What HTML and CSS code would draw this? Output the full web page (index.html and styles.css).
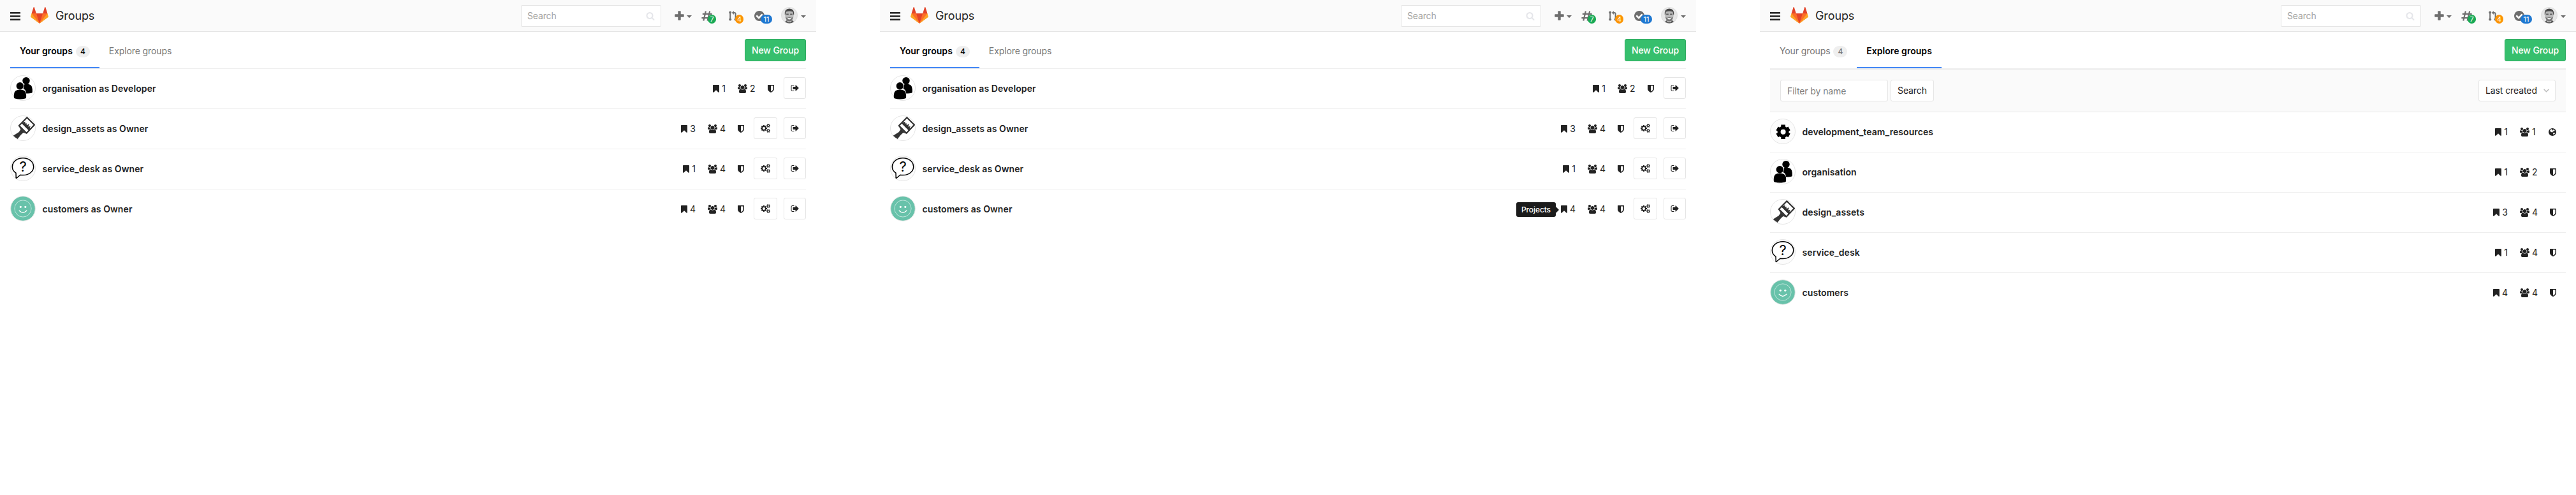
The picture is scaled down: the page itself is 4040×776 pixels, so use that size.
FILE: index.html
```html
<!DOCTYPE html>
<html lang="en">
<head>
<meta charset="utf-8">
<title>Groups</title>
<link rel="stylesheet" href="styles.css">
</head>
<body>
<svg class="sprite" aria-hidden="true">
  <symbol id="i-menu" viewBox="0 0 16 13"><path d="M0 0h16v2.4H0zM0 5.3h16v2.4H0zM0 10.6h16V13H0z"/></symbol>
  <symbol id="i-logo" viewBox="0 0 36 36"><path fill="#e24329" d="M2 14l9.38 9v-9l-4-12.28c-.205-.632-1.176-.632-1.38 0zM34 14l-9.38 9v-9l4-12.28c.205-.632 1.176-.632 1.38 0zM18 34.38L3 14h30z"/><path fill="#fc6d26" d="M18 34.38L11.38 14H2l4 11.5zM18 34.38L24.62 14H34l-4 11.5z"/><path fill="#fca326" d="M2 14L.1 20.16c-.18.565 0 1.2.5 1.56L18 34.38zM34 14l1.9 6.16c.18.565 0 1.2-.5 1.56L18 34.38z"/></symbol>
  <symbol id="i-search" viewBox="0 0 1792 1792"><path d="M1216 832q0-185-131.5-316.5t-316.5-131.5-316.5 131.5-131.5 316.5 131.5 316.5 316.5 131.5 316.5-131.5 131.5-316.5zm512 832q0 52-38 90t-90 38q-54 0-90-38l-343-342q-179 124-399 124-143 0-273.5-55.5t-225-150-150-225-55.5-273.5 55.5-273.5 150-225 225-150 273.5-55.5 273.5 55.5 225 150 150 225 55.5 273.5q0 220-124 399l343 343q37 37 37 90z"/></symbol>
  <symbol id="i-plus" viewBox="0 0 15 15"><rect x="5.3" y=".3" width="4.4" height="14.4" rx="1"/><rect x=".3" y="5.3" width="14.4" height="4.4" rx="1"/></symbol>
  <symbol id="i-caret" viewBox="0 0 8 4"><path d="M0 0h8L4.4 3.8a.5.5 0 0 1-.8 0z"/></symbol>
  <symbol id="i-hash" viewBox="0 0 17 16"><path fill="none" stroke="currentColor" stroke-width="2.2" d="M6.9.4L3.3 15.6M13.2.4L9.6 15.6M1.8 4.9h14.8M.4 11.1h14.8"/></symbol>
  <symbol id="i-merge" viewBox="0 0 13 16"><g fill="none" stroke="currentColor" stroke-width="2"><path d="M2.2 2v12M7 3h1.8q1.800 0 1.800 1.800V14"/></g><circle cx="2.200" cy="2.400" r="2"/><circle cx="2.200" cy="13.600" r="2"/><circle cx="10.600" cy="13.600" r="2"/><path d="M7.800 0v6L4.800 3z"/></symbol>
  <symbol id="i-check" viewBox="128 128 1536 1536"><path d="M1412 734q0-28-18-46l-91-90q-19-19-45-19t-45 19l-408 407-226-226q-19-19-45-19t-45 19l-91 90q-18 18-18 46 0 27 18 45l362 362q19 19 45 19 27 0 46-19l543-543q18-18 18-45zm252 162q0 209-103 385.5t-279.5 279.5-385.5 103-385.5-103-279.5-279.5-103-385.5 103-385.5 279.5-279.5 385.5-103 385.5 103 279.5 279.5 103 385.5z"/></symbol>
  <symbol id="i-bookmark" viewBox="256 128 1281 1536"><path d="M1420 128q23 0 44 9 33 13 52.5 41t19.5 62v1289q0 34-19.5 62t-52.5 41q-19 8-44 8-48 0-83-32l-441-424-441 424q-36 33-83 33-23 0-44-9-33-13-52.5-41t-19.5-62v-1289q0-34 19.5-62t52.5-41q21-9 44-9h1048z"/></symbol>
  <symbol id="i-users" viewBox="0 0 1920 1792"><path d="M593 896q-162 5-265 128h-134q-82 0-138-40.5t-56-118.5q0-353 124-353 6 0 43.5 21t97.5 42.5 119 21.5q67 0 133-23-5 37-5 66 0 139 81 256zm1071 637q0 120-73 189.5t-194 69.5h-874q-121 0-194-69.5t-73-189.5q0-53 3.5-103.5t14-109 26.5-108.5 43-97.5 62-81 85.5-53.5 111.5-20q10 0 43 21.5t73 48 107 48 135 21.5 135-21.5 107-48 73-48 43-21.5q61 0 111.5 20t85.5 53.5 62 81 43 97.5 26.5 108.5 14 109 3.5 103.5zm-1024-1277q0 106-75 181t-181 75-181-75-75-181 75-181 181-75 181 75 75 181zm704 384q0 159-112.5 271.5t-271.5 112.5-271.5-112.5-112.5-271.5 112.5-271.5 271.5-112.5 271.5 112.5 112.5 271.5zm576 225q0 78-56 118.5t-138 40.5h-134q-103-123-265-128 81-117 81-256 0-29-5-66 66 23 133 23 59 0 119-21.5t97.5-42.5 43.5-21q124 0 124 353zm-128-609q0 106-75 181t-181 75-181-75-75-181 75-181 181-75 181 75 75 181z"/></symbol>
  <symbol id="i-shield" viewBox="256 128 1280 1536"><path d="M1344 960v-640h-448v1137q119-63 213-137 235-184 235-360zm192-768v768q0 86-33.5 170.5t-83 150-118 127.5-126.5 103-121 77.5-89.5 49.5-42.5 20q-12 6-26 6t-26-6q-16-7-42.5-20t-89.5-49.5-121-77.5-126.5-103-118-127.5-83-150-33.5-170.5v-768q0-26 19-45t45-19h1152q26 0 45 19t19 45z"/></symbol>
  <symbol id="i-globe" viewBox="0 0 12 12"><circle cx="6" cy="6" r="6"/><path fill="#fff" d="M2.200 3.200Q3.200 1.800 4.800 1.300l1 .8-.6.9 1 .7 1-1.500 1.600.3.900 1.200-1.300.9-1.600.7-1.400 1.500-1.200-.9-1.500-.6zM7.200 7.600l1.700-.7 1.200.5-.7 1.500-1.500 1-.8-1z"/></symbol>
  <symbol id="i-leave" viewBox="0 128 1664 1536"><path d="M704 1440q0 4 1 20t.5 26.5-3 23.5-10 19.5-20.5 6.5h-320q-119 0-203.5-84.5t-84.5-203.5v-704q0-119 84.5-203.5t203.5-84.5h320q13 0 22.5 9.5t9.5 22.5q0 4 1 20t.5 26.5-3 23.5-10 19.5-20.5 6.5h-320q-66 0-113 47t-47 113v704q0 66 47 113t113 47h312l11.5 1 11.5 3 8 5.5 7 9 2 13.5zm928-544q0 26-19 45l-544 544q-19 19-45 19t-45-19-19-45v-288h-448q-26 0-45-19t-19-45v-384q0-26 19-45t45-19h448v-288q0-26 19-45t45-19 45 19l544 544q19 19 19 45z"/></symbol>
  <symbol id="i-cogs" viewBox="0 0 1920 1792"><path d="M896 896q0-106-75-181t-181-75-181 75-75 181 75 181 181 75 181-75 75-181zm768 512q0-52-38-90t-90-38-90 38-38 90q0 53 37.5 90.5t90.5 37.5 90.5-37.5 37.5-90.5zm0-1024q0-52-38-90t-90-38-90 38-38 90q0 53 37.5 90.5t90.5 37.5 90.5-37.5 37.5-90.5zm-384 421v185q0 10-7 19.5t-16 10.5l-155 24q-11 35-32 76 34 48 90 115 7 11 7 20 0 12-7 19-23 30-82.5 89.5t-78.5 59.5q-11 0-21-7l-115-90q-37 19-77 31-11 108-23 155-7 24-30 24h-186q-11 0-20-7.5t-10-17.5l-23-153q-34-10-75-31l-118 89q-7 7-20 7-11 0-21-8-144-133-144-160 0-9 7-19 10-14 41-53t47-61q-23-44-35-82l-152-24q-10-1-17-9.5t-7-19.5v-185q0-10 7-19.5t16-10.5l155-24q11-35 32-76-34-48-90-115-7-11-7-20 0-12 7-20 22-30 82-89t79-59q11 0 21 7l115 90q34-18 77-32 11-108 23-154 7-24 30-24h186q11 0 20 7.5t10 17.5l23 153q34 10 75 31l118-89q8-7 20-7 11 0 21 8 144 133 144 160 0 8-7 19-12 16-42 54t-45 60q23 48 34 82l152 23q10 2 17 10.5t7 19.5zm640 533v140q0 16-149 31-12 27-30 52 51 113 51 138 0 4-4 7-122 71-124 71-8 0-46-47t-52-68q-20 2-30 2t-30-2q-14 21-52 68t-46 47q-2 0-124-71-4-3-4-7 0-25 51-138-18-25-30-52-149-15-149-31v-140q0-16 149-31 13-29 30-52-51-113-51-138 0-4 4-7 4-2 35-20t59-34 30-16q8 0 46 46.5t52 67.5q20-2 30-2t30 2q51-71 92-112l6-2q4 0 124 70 4 3 4 7 0 25-51 138 17 23 30 52 149 15 149 31zm0-1024v140q0 16-149 31-12 27-30 52 51 113 51 138 0 4-4 7-122 71-124 71-8 0-46-47t-52-68q-20 2-30 2t-30-2q-14 21-52 68t-46 47q-2 0-124-71-4-3-4-7 0-25 51-138-18-25-30-52-149-15-149-31v-140q0-16 149-31 13-29 30-52-51-113-51-138 0-4 4-7 4-2 35-20t59-34 30-16q8 0 46 46.5t52 67.5q20-2 30-2t30 2q51-71 92-112l6-2q4 0 124 70 4 3 4 7 0 25-51 138 17 23 30 52 149 15 149 31z"/></symbol>
  <symbol id="i-chevron" viewBox="0 0 10 6"><path fill="none" stroke="currentColor" stroke-width="1.8" d="M.8.8L5 4.9 9.2.8"/></symbol>
  <symbol id="i-face" viewBox="0 0 26 26">
    <circle cx="13" cy="13" r="12.6" fill="#e6e6e6" stroke="#dcdcdc" stroke-width=".8"/>
    <path d="M6 23.200Q8.500 20.500 10 20.400h6Q18.500 20.500 20 23.200 13 27.800 6 23.200z" fill="#555"/>
    <path d="M9 19h8l-1 5h-6z" fill="#bdbdbd"/>
    <ellipse cx="13" cy="12.600" rx="6.800" ry="9" fill="#b9b9b9"/>
    <path d="M5.800 12Q4.800 2.500 13 2.400q8.200.1 7.200 9.600l-1-.2-.8-4.300Q13 5.500 7.600 7.500l-.8 4.300z" fill="#4a4a4a"/>
    <path d="M8.200 10.500h3.600v1.500H8.200zM14.200 10.500h3.600v1.500h-3.600z" fill="#555"/>
    <path d="M7 15.500q1.200 1.300 3 1.200l3-.9 3 .9q1.800.1 3-1.200-.8 6.800-6 7-5.200-.2-6-7z" fill="#767676"/>
    <path d="M9.800 17.300h6.400q-.8 2.200-3.200 2.200t-3.200-2.200z" fill="#f6f6f6"/>
  </symbol>
  <symbol id="a-people" viewBox="0 0 40 40"><circle cx="20" cy="20" r="19.500" fill="#fff" stroke="#e5e5e5"/><circle cx="25" cy="8.600" r="5.700"/><path d="M22 14.500q1.500-1 4-1 8.800.3 8.800 8.500v4.200q-.1 1.300-1.300 1.600-4 1.200-8.500.6Q24.800 23 20.600 21z"/><circle cx="15.300" cy="16.700" r="6.400" fill="#fff"/><circle cx="15.300" cy="16.700" r="5.700"/><path d="M5.800 31q0-8.400 9.700-8.400T25.100 31v3.500q0 1.500-1.600 2-4 1-8 1t-8-1q-1.700-.5-1.700-2z"/></symbol>
  <symbol id="a-brush" viewBox="0 0 40 40"><circle cx="20" cy="20" r="19.500" fill="#fff" stroke="#e5e5e5"/><path d="M26.300 3.200L37.900 14.800 25.600 27.800 13.800 15.900z" fill="#fff" stroke="#333" stroke-width="2.200" stroke-linejoin="round"/><g fill="#333"><path d="M13.200 16.500L25 28.500l-4.500-1.500-3.800 3.500-5.200 6.500q-1.500-1.800-3.200-2.300-1.500-1.700-3.600-3l9-5.600 2.700-4.200-2.300-4z"/><path d="M17.500 12L29.500 24l3.200-3.200-2.200-.8 1.200-2.900-3.400.5 1.700-4.600-4 2.200-.6-3.500-1.700 1.400-.3-3.300z"/></g></symbol>
  <symbol id="a-bubble" viewBox="0 0 40 40"><circle cx="20" cy="20" r="19.500" fill="#fcfcfc" stroke="#e5e5e5"/><path d="M9 27.200C5 24.600 3.300 21.300 3.300 17.500 3.300 9.500 10.800 3.800 20 3.800s16.700 5.700 16.700 13.400S29.500 30.500 20 30.500q-2.200 0-4.100-.3l-5.700 4.800q-1.500.6-1-1z" fill="#fff" stroke="#000" stroke-width="1.500" stroke-linejoin="round"/></symbol>
  <symbol id="a-smile" viewBox="0 0 40 40"><circle cx="20" cy="20" r="19.300" fill="#68c2aa" stroke="#e0e5e3"/><circle cx="20" cy="20" r="13.100" fill="none" stroke="#d5eee7" stroke-width=".8"/><g fill="#fff"><circle cx="16.300" cy="17.300" r="1.600"/><circle cx="23.800" cy="17.300" r="1.600"/></g><path d="M14.200 23.300q5.800 6 11.600 0" fill="none" stroke="#fff" stroke-width="1.300" stroke-linecap="round"/></symbol>
  <symbol id="a-gear" viewBox="0 0 40 40"><circle cx="20" cy="20" r="19.500" fill="#fcfcfc" stroke="#e5e5e5"/><circle cx="20.600" cy="20.800" r="6.500" fill="none" stroke="#000" stroke-width="5"/><path stroke="#000" stroke-width="6.600" d="M20.600 9.600v5M20.600 32v-5M11.100 15.300l4 2.300M30.100 26.300l-4-2.300M11.100 26.300l4-2.300M30.100 15.300l-4 2.300"/></symbol>
</svg>

<main class="board">
  <section class="panel">
    <header class="topbar">
      <svg class="menu"><use href="#i-menu"/></svg>
      <svg class="logo"><use href="#i-logo"/></svg>
      <h1 class="title">Groups</h1>
      <div class="search"><span>Search</span><svg><use href="#i-search"/></svg></div>
      <nav class="tools">
        <span class="tool tool-new"><svg class="plus"><use href="#i-plus"/></svg><svg class="caret"><use href="#i-caret"/></svg></span>
        <span class="tool tool-issues"><svg class="hash"><use href="#i-hash"/></svg><b class="count green">7</b></span>
        <span class="tool tool-merges"><svg class="merge"><use href="#i-merge"/></svg><b class="count orange">4</b></span>
        <span class="tool tool-todos"><svg class="check"><use href="#i-check"/></svg><b class="count blue">11</b></span>
        <span class="tool tool-user"><svg class="face"><use href="#i-face"/></svg><svg class="caret"><use href="#i-caret"/></svg></span>
      </nav>
    </header>
    <div class="content">
      <div class="tabs">
        <a class="tab active">Your groups<span class="pill">4</span></a>
        <a class="tab">Explore groups</a>
        <a class="new-group">New Group</a>
      </div>
      <ul class="groups">
        <li class="group"><svg class="avatar"><use href="#a-people"/></svg><span class="name">organisation as Developer</span>
          <div class="stats"><span class="projects"><svg><use href="#i-bookmark"/></svg>1</span><span class="members"><svg><use href="#i-users"/></svg>2</span><svg class="shield"><use href="#i-shield"/></svg></div>
          <a class="btn leave"><svg><use href="#i-leave"/></svg></a></li>
        <li class="group"><svg class="avatar"><use href="#a-brush"/></svg><span class="name">design_assets as Owner</span>
          <div class="stats"><span class="projects"><svg><use href="#i-bookmark"/></svg>3</span><span class="members"><svg><use href="#i-users"/></svg>4</span><svg class="shield"><use href="#i-shield"/></svg></div>
          <a class="btn cogs"><svg><use href="#i-cogs"/></svg></a><a class="btn leave"><svg><use href="#i-leave"/></svg></a></li>
        <li class="group"><svg class="avatar"><use href="#a-bubble"/><text class="mark" x="20" y="24.800" text-anchor="middle">?</text></svg><span class="name">service_desk as Owner</span>
          <div class="stats"><span class="projects"><svg><use href="#i-bookmark"/></svg>1</span><span class="members"><svg><use href="#i-users"/></svg>4</span><svg class="shield"><use href="#i-shield"/></svg></div>
          <a class="btn cogs"><svg><use href="#i-cogs"/></svg></a><a class="btn leave"><svg><use href="#i-leave"/></svg></a></li>
        <li class="group"><svg class="avatar"><use href="#a-smile"/></svg><span class="name">customers as Owner</span>
          <div class="stats"><span class="projects"><svg><use href="#i-bookmark"/></svg>4</span><span class="members"><svg><use href="#i-users"/></svg>4</span><svg class="shield"><use href="#i-shield"/></svg></div>
          <a class="btn cogs"><svg><use href="#i-cogs"/></svg></a><a class="btn leave"><svg><use href="#i-leave"/></svg></a></li>
      </ul>
    </div>
  </section>

  <section class="panel">
    <header class="topbar">
      <svg class="menu"><use href="#i-menu"/></svg>
      <svg class="logo"><use href="#i-logo"/></svg>
      <h1 class="title">Groups</h1>
      <div class="search"><span>Search</span><svg><use href="#i-search"/></svg></div>
      <nav class="tools">
        <span class="tool tool-new"><svg class="plus"><use href="#i-plus"/></svg><svg class="caret"><use href="#i-caret"/></svg></span>
        <span class="tool tool-issues"><svg class="hash"><use href="#i-hash"/></svg><b class="count green">7</b></span>
        <span class="tool tool-merges"><svg class="merge"><use href="#i-merge"/></svg><b class="count orange">4</b></span>
        <span class="tool tool-todos"><svg class="check"><use href="#i-check"/></svg><b class="count blue">11</b></span>
        <span class="tool tool-user"><svg class="face"><use href="#i-face"/></svg><svg class="caret"><use href="#i-caret"/></svg></span>
      </nav>
    </header>
    <div class="content">
      <div class="tabs">
        <a class="tab active">Your groups<span class="pill">4</span></a>
        <a class="tab">Explore groups</a>
        <a class="new-group">New Group</a>
      </div>
      <ul class="groups">
        <li class="group"><svg class="avatar"><use href="#a-people"/></svg><span class="name">organisation as Developer</span>
          <div class="stats"><span class="projects"><svg><use href="#i-bookmark"/></svg>1</span><span class="members"><svg><use href="#i-users"/></svg>2</span><svg class="shield"><use href="#i-shield"/></svg></div>
          <a class="btn leave"><svg><use href="#i-leave"/></svg></a></li>
        <li class="group"><svg class="avatar"><use href="#a-brush"/></svg><span class="name">design_assets as Owner</span>
          <div class="stats"><span class="projects"><svg><use href="#i-bookmark"/></svg>3</span><span class="members"><svg><use href="#i-users"/></svg>4</span><svg class="shield"><use href="#i-shield"/></svg></div>
          <a class="btn cogs"><svg><use href="#i-cogs"/></svg></a><a class="btn leave"><svg><use href="#i-leave"/></svg></a></li>
        <li class="group"><svg class="avatar"><use href="#a-bubble"/><text class="mark" x="20" y="24.800" text-anchor="middle">?</text></svg><span class="name">service_desk as Owner</span>
          <div class="stats"><span class="projects"><svg><use href="#i-bookmark"/></svg>1</span><span class="members"><svg><use href="#i-users"/></svg>4</span><svg class="shield"><use href="#i-shield"/></svg></div>
          <a class="btn cogs"><svg><use href="#i-cogs"/></svg></a><a class="btn leave"><svg><use href="#i-leave"/></svg></a></li>
        <li class="group"><svg class="avatar"><use href="#a-smile"/></svg><span class="name">customers as Owner</span>
          <div class="stats"><span class="projects"><span class="tooltip">Projects</span><svg><use href="#i-bookmark"/></svg>4</span><span class="members"><svg><use href="#i-users"/></svg>4</span><svg class="shield"><use href="#i-shield"/></svg></div>
          <a class="btn cogs"><svg><use href="#i-cogs"/></svg></a><a class="btn leave"><svg><use href="#i-leave"/></svg></a></li>
      </ul>
    </div>
  </section>

  <section class="panel">
    <header class="topbar">
      <svg class="menu"><use href="#i-menu"/></svg>
      <svg class="logo"><use href="#i-logo"/></svg>
      <h1 class="title">Groups</h1>
      <div class="search"><span>Search</span><svg><use href="#i-search"/></svg></div>
      <nav class="tools">
        <span class="tool tool-new"><svg class="plus"><use href="#i-plus"/></svg><svg class="caret"><use href="#i-caret"/></svg></span>
        <span class="tool tool-issues"><svg class="hash"><use href="#i-hash"/></svg><b class="count green">7</b></span>
        <span class="tool tool-merges"><svg class="merge"><use href="#i-merge"/></svg><b class="count orange">4</b></span>
        <span class="tool tool-todos"><svg class="check"><use href="#i-check"/></svg><b class="count blue">11</b></span>
        <span class="tool tool-user"><svg class="face"><use href="#i-face"/></svg><svg class="caret"><use href="#i-caret"/></svg></span>
      </nav>
    </header>
    <div class="content">
      <div class="tabs">
        <a class="tab">Your groups<span class="pill">4</span></a>
        <a class="tab active">Explore groups</a>
        <a class="new-group">New Group</a>
      </div>
      <div class="filters">
        <div class="field">Filter by name</div>
        <a class="control">Search</a>
        <a class="control sort">Last created<svg><use href="#i-chevron"/></svg></a>
      </div>
      <ul class="groups">
        <li class="group"><svg class="avatar"><use href="#a-gear"/></svg><span class="name">development_team_resources</span>
          <div class="stats"><span class="projects"><svg><use href="#i-bookmark"/></svg>1</span><span class="members"><svg><use href="#i-users"/></svg>1</span><svg class="shield globe"><use href="#i-globe"/></svg></div></li>
        <li class="group"><svg class="avatar"><use href="#a-people"/></svg><span class="name">organisation</span>
          <div class="stats"><span class="projects"><svg><use href="#i-bookmark"/></svg>1</span><span class="members"><svg><use href="#i-users"/></svg>2</span><svg class="shield"><use href="#i-shield"/></svg></div></li>
        <li class="group"><svg class="avatar"><use href="#a-brush"/></svg><span class="name">design_assets</span>
          <div class="stats"><span class="projects"><svg><use href="#i-bookmark"/></svg>3</span><span class="members"><svg><use href="#i-users"/></svg>4</span><svg class="shield"><use href="#i-shield"/></svg></div></li>
        <li class="group"><svg class="avatar"><use href="#a-bubble"/><text class="mark" x="20" y="24.800" text-anchor="middle">?</text></svg><span class="name">service_desk</span>
          <div class="stats"><span class="projects"><svg><use href="#i-bookmark"/></svg>1</span><span class="members"><svg><use href="#i-users"/></svg>4</span><svg class="shield"><use href="#i-shield"/></svg></div></li>
        <li class="group"><svg class="avatar"><use href="#a-smile"/></svg><span class="name">customers</span>
          <div class="stats"><span class="projects"><svg><use href="#i-bookmark"/></svg>4</span><span class="members"><svg><use href="#i-users"/></svg>4</span><svg class="shield"><use href="#i-shield"/></svg></div></li>
      </ul>
    </div>
  </section>
</main>
</body>
</html>
```

FILE: styles.css
```css
* { box-sizing: border-box; }
body { margin: 0; background: #fff; color: #222; font: 14px/20px Inter, "Open Sans", sans-serif; }
svg { display: block; flex: none; fill: currentColor; }
.sprite { display: none; }
.mark { font: 400 22px Inter, sans-serif; fill: #000; }

.board { display: flex; gap: 100px; width: 4040px; height: 776px; overflow: hidden; }
.panel { width: 1280px; flex: none; }

/* Top bar */
.topbar { display: flex; align-items: center; height: 50px; padding: 0 16px; background: #fafafa; border-bottom: 1px solid #e5e5e5; }
.menu { width: 16px; height: 13px; margin: 2px 16px 0 0; }
.logo { width: 28px; height: 28px; margin: -1px 11px 0 0; }
.title { margin: 1px 0 0; font-size: 18px; line-height: 24px; font-weight: 400; letter-spacing: -.1px; }
.search { display: flex; align-items: center; justify-content: space-between; width: 220px; height: 34px; margin: 0 21px 0 auto; padding: 1px 9px; background: #fff; border: 1px solid #e5e5e5; border-radius: 2px; color: #a3a3a3; letter-spacing: -.15px; }
.search span { padding-top: 1px; }
.search svg { width: 14px; height: 14px; color: #e5e6ea; }
.tools { display: flex; align-items: center; height: 100%; color: #6e6e6e; }
.tool { position: relative; display: flex; align-items: center; height: 100%; }
.tool-new { width: 42px; gap: 4px; }
.tool-issues { width: 43px; }
.tool-merges { width: 40px; }
.tool-todos { width: 42px; }
.tool-user { width: 39px; gap: 5px; }
.plus { width: 15px; height: 15px; }
.caret { width: 8px; height: 4px; margin-top: 3px; }
.hash { width: 17px; height: 16px; }
.merge { width: 13px; height: 16px; }
.check { width: 16px; height: 16px; }
.face { width: 26px; height: 26px; margin-top: -1px; }
.count { position: absolute; top: 23px; height: 14px; border-radius: 7px; color: #fff; font: 400 11px/14px Inter, sans-serif; text-align: center; }
.green { left: 10px; width: 13px; background: #1aaa55; }
.orange { left: 10px; width: 13px; background: #fc9403; }
.blue { left: 10px; width: 18px; background: #1f78d1; }

/* Tabs */
.content { padding: 0 16px; }
.tabs { display: flex; height: 58px; border-bottom: 1px solid #eee; }
.tab { display: flex; align-items: center; height: 57px; padding: 5px 15px 0; border-bottom: 2px solid transparent; color: #777; letter-spacing: -.1px; }
.tab.active { border-bottom-color: #4387f5; color: #000; font-weight: 600; letter-spacing: .05px; }
.pill { height: 18px; margin: 1px 0 0 5px; padding: 0 7px; border-radius: 9px; background: #efefef; font-size: 12px; line-height: 18px; font-weight: 500; }
.new-group { width: 96px; height: 35px; margin: 11px 0 0 auto; border: 1px solid #2fab60; border-radius: 3px; background: #36bf6d; color: #fff; font-weight: 500; line-height: 33px; letter-spacing: -.1px; text-align: center; }

/* Filter bar */
.filters { display: flex; align-items: center; gap: 4px; height: 68px; padding: 0 16px; background: #fafafa; border-top: 1px solid #e7e7e7; border-bottom: 1px solid #e7e7e7; }
.field, .control { height: 34px; padding: 0 10px; border: 1px solid #e5e5e5; border-radius: 3px; background: #fff; line-height: 32px; letter-spacing: -.1px; }
.field { width: 169px; padding-top: 1px; color: #808080; }
.control { width: 68px; }
.sort { display: flex; align-items: center; justify-content: space-between; width: 121px; margin-left: auto; padding-right: 9px; }
.sort svg { width: 9px; height: 6px; color: #bbb; }

/* Group list */
.groups { margin: 0; padding: 0; list-style: none; }
.group { display: flex; align-items: center; height: 63px; padding: 0 0 2px; border-bottom: 1px solid #eee; }
.group:last-child { border-bottom-color: transparent; }
.avatar { width: 40px; height: 40px; color: #000; }
.name { padding: 2px 0 0 10.5px; font-weight: 600; letter-spacing: .08px; }
.stats { display: flex; align-items: center; margin-left: auto; padding: 2px 15px 0 0; }
.projects { position: relative; display: flex; align-items: center; gap: 4px; margin-right: 19px; }
.projects svg { width: 10px; height: 12px; }
.members { display: flex; align-items: center; gap: 4px; width: 47px; }
.members svg { width: 15px; height: 14px; }
.shield { width: 10px; height: 12px; }
.globe { width: 12px; height: 12px; margin: 0 0 0 -2px; }
.btn { display: flex; align-items: center; justify-content: center; width: 35px; height: 34px; border: 1px solid #e5e5e5; border-radius: 3px; background: #fff; }
.btn svg { width: 13px; height: 12px; }
.cogs { width: 37px; margin-right: 10px; }
.btn.cogs svg { width: 15px; height: 14px; }

.tooltip { position: absolute; right: calc(100% + 8px); top: -1px; width: 62px; height: 23px; border-radius: 3px; background: #1b1b1b; color: #fff; font-size: 12px; line-height: 24px; font-weight: 500; letter-spacing: -.1px; text-align: center; }
.tooltip::after { content: ""; position: absolute; left: 100%; top: 7px; border: 5px solid transparent; border-left-color: #1b1b1b; border-right: 0; }
```
